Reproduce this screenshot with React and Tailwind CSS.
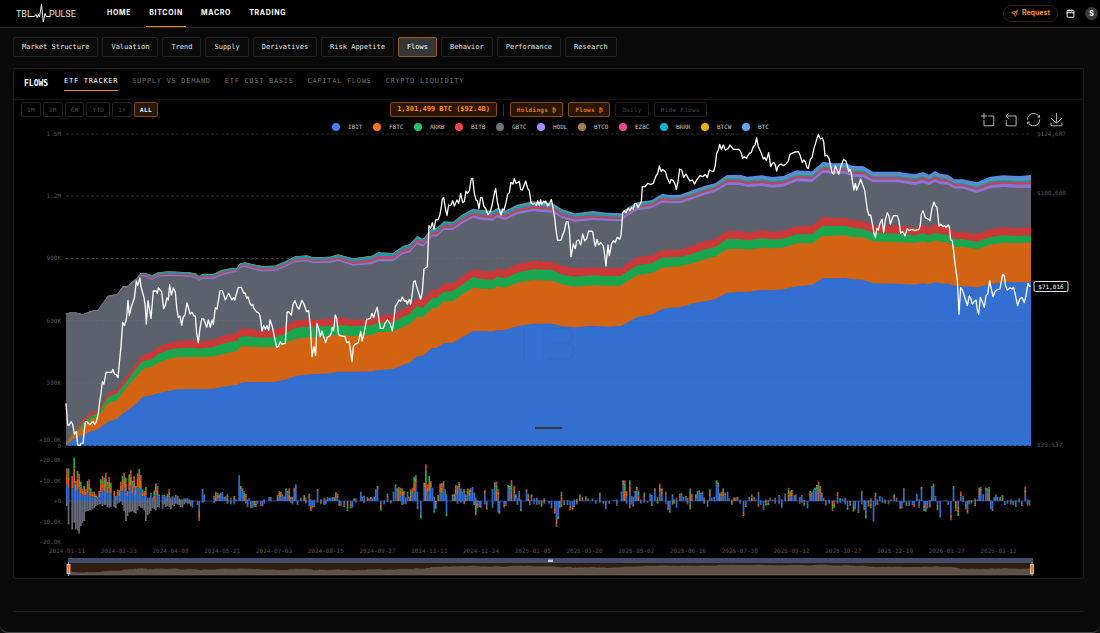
import { useState } from "react";
import { Calendar, Send } from "lucide-react";

const mainNav = ["HOME", "BITCOIN", "MACRO", "TRADING"];
const sections = [
  "Market Structure",
  "Valuation",
  "Trend",
  "Supply",
  "Derivatives",
  "Risk Appetite",
  "Flows",
  "Behavior",
  "Performance",
  "Research",
];
const tabs = ["ETF TRACKER", "SUPPLY VS DEMAND", "ETF COST BASIS", "CAPITAL FLOWS", "CRYPTO LIQUIDITY"];
const ranges = ["1M", "3M", "6M", "YTD", "1Y", "ALL"];

const legend = [
  { name: "IBIT", dot: "bg-[#3b82f6]" },
  { name: "FBTC", dot: "bg-[#f97316]" },
  { name: "ARKB", dot: "bg-[#22c55e]" },
  { name: "BITB", dot: "bg-[#ef4444]" },
  { name: "GBTC", dot: "bg-[#6b7280]" },
  { name: "HODL", dot: "bg-[#a78bfa]" },
  { name: "BTCO", dot: "bg-[#a87c4f]" },
  { name: "EZBC", dot: "bg-[#ec4899]" },
  { name: "BRRR", dot: "bg-[#06b6d4]" },
  { name: "BTCW", dot: "bg-[#eab308]" },
  { name: "BTC", dot: "bg-[#60a5fa]" },
];

// x, then the upper edge of: whole stack, GBTC, BITB, ARKB, FBTC, IBIT
const stack = [
  [66, 313.5, 313.7, 442, 443, 444, 445],
  [73, 312, 312.6, 431.7, 433, 435, 439.3],
  [78, 313, 313.7, 426, 429, 431, 437],
  [83, 314.3, 315, 420, 423.3, 426.7, 435],
  [90, 311.3, 312, 412.7, 416.7, 420, 431.7],
  [98, 309.7, 310.5, 410, 413.3, 416.7, 429.3],
  [108, 295.7, 297, 393.3, 397.3, 403.3, 421.7],
  [117, 294.3, 295.6, 388.7, 393.3, 400, 418.7],
  [123, 286.3, 287.7, 380.7, 385.7, 391.7, 413.3],
  [127, 286.3, 287.7, 376, 381, 386.7, 410.7],
  [137, 277.7, 279.5, 361.7, 367.3, 376, 403.3],
  [141, 272.7, 275.7, 356.7, 362.3, 370.7, 398.3],
  [145, 273, 276.7, 354, 360.7, 368.3, 396.3],
  [152, 275.3, 279.7, 352, 359.3, 366.7, 395.3],
  [158, 272.3, 276.7, 347, 354, 363, 393.3],
  [168, 271.3, 276, 343.3, 350, 359, 391],
  [178, 271.7, 276.3, 341, 348.3, 357.3, 389.3],
  [190, 272.3, 276.7, 340.3, 347.7, 357, 389],
  [196, 273.5, 278.5, 340.7, 348, 357, 389],
  [199, 276, 280.7, 341.7, 348.7, 357.3, 389],
  [203, 273.7, 278.7, 341, 348, 357, 389],
  [213, 274, 279, 340, 347.3, 356.3, 388.7],
  [222, 270, 275.3, 336, 344, 354.3, 386.7],
  [230, 268.3, 273, 334, 342, 352.3, 385.7],
  [237, 267.7, 272, 333.3, 341, 351, 385],
  [240, 263.3, 268, 329, 336.7, 347, 383],
  [245, 262.3, 267, 328.3, 336, 346, 382],
  [252, 264, 269.3, 329.3, 336.7, 346.7, 382],
  [262, 266, 271.3, 330.7, 337.7, 347, 382],
  [275, 265.7, 271, 330, 337.3, 346.7, 381.7],
  [285, 261.3, 267, 325.7, 333.7, 343.3, 379.7],
  [295, 256.3, 262.3, 320.5, 328, 339, 376],
  [307, 255.3, 261.3, 319, 326.7, 337.3, 374.7],
  [313, 257.3, 263.3, 320, 327, 337.3, 374],
  [330, 256.7, 262.7, 318.7, 326, 336, 373.3],
  [338, 254.3, 261, 316.7, 324.7, 334.7, 371.7],
  [353, 258.3, 265.7, 319.7, 326.3, 336, 371.7],
  [372, 255.7, 264, 318.3, 325.3, 334.7, 371.3],
  [378, 252.3, 261.3, 315.7, 322.7, 332.3, 370],
  [393, 253, 261.3, 314.3, 322.3, 331.7, 369],
  [403, 246, 254.3, 309, 316.7, 326.7, 364.7],
  [410, 244, 252.3, 306, 314, 324, 362.3],
  [417, 236, 244.3, 298, 306, 316.7, 356.3],
  [423, 238.7, 246.7, 298.7, 307.7, 317.3, 355.7],
  [432, 228.3, 236.7, 289.3, 298.3, 308.3, 348],
  [437, 227.7, 236.7, 290, 297.3, 307.7, 347.7],
  [444, 221.3, 230, 283.3, 291.7, 301.3, 343],
  [453, 221.7, 230, 283.3, 291, 301, 342.7],
  [463, 214, 223.3, 275.7, 284, 294, 336.7],
  [473, 208.7, 217.7, 269.3, 277.3, 287.7, 331],
  [482, 210, 220, 270.7, 279, 288.7, 331],
  [493, 210.7, 220.7, 271.7, 280, 289, 331.3],
  [497, 208, 217.3, 268, 276.7, 286.3, 330],
  [505, 210.7, 220, 270, 278.3, 287.7, 330],
  [517, 204.7, 214.3, 264.3, 272.7, 282.7, 326.3],
  [533, 201.3, 211.3, 260.7, 269.3, 280, 323.7],
  [553, 203.3, 212.7, 262, 270, 280.7, 323.7],
  [562, 209.3, 218.3, 266, 274.7, 284.3, 326.3],
  [575, 213.3, 221.7, 268.3, 276.7, 286.7, 327.3],
  [593, 211, 220, 267.3, 275.3, 285.3, 325.7],
  [607, 212.7, 220.7, 268.3, 276, 285.7, 326.7],
  [621, 213.3, 221.3, 268, 276, 285.7, 326],
  [627, 208, 216, 263.3, 271.7, 281.3, 322.7],
  [638, 202, 210, 257, 265, 275, 316.7],
  [652, 200, 208, 255.3, 263.3, 273, 314.7],
  [662, 193.7, 202.7, 250, 257.7, 267.7, 309],
  [670, 195, 203.3, 249.7, 257.3, 267, 307.7],
  [680, 194.7, 203.3, 249.7, 257, 266.3, 307.3],
  [693, 190, 199, 245.3, 253.7, 263.3, 303.3],
  [705, 185.7, 194.7, 241, 249.3, 259, 301],
  [715, 183.3, 192, 239.3, 247.3, 256.7, 299.3],
  [727, 175, 185, 231, 239, 249.3, 292.7],
  [740, 174.7, 185, 231, 239, 248.7, 291.7],
  [747, 176.7, 187, 232.7, 240.3, 249.7, 292],
  [762, 175.3, 186, 230.3, 238.3, 247.7, 289.7],
  [772, 177, 187.7, 231.7, 239.3, 248.3, 290],
  [783, 176, 186.7, 230.7, 238.7, 247.7, 289.3],
  [797, 170.3, 181.3, 226, 234.3, 243.3, 286.3],
  [812, 171.3, 182, 225.7, 234.3, 243.3, 285],
  [823, 161.7, 172.7, 217, 225.7, 235.7, 278],
  [833, 163.3, 174, 218, 226, 235.7, 278.3],
  [845, 163, 173.7, 217.7, 225.7, 235.3, 277.7],
  [853, 166, 177, 220, 228, 237, 279.3],
  [863, 166, 177.3, 221, 229, 237.3, 279.7],
  [873, 171.7, 182.3, 225.3, 232.7, 241.3, 283.3],
  [897, 171.7, 182.3, 225.3, 233.7, 242, 283.7],
  [915, 174.3, 185, 227.3, 235.3, 243, 284.7],
  [923, 172, 182.7, 225, 233.3, 241.3, 283.3],
  [929, 174.7, 185, 227, 235.3, 243, 284.3],
  [935, 171, 181.7, 224, 232.7, 240.3, 282.3],
  [940, 173.7, 184, 226, 234, 241.7, 283.3],
  [948, 174.7, 184.7, 226.7, 234.7, 242.3, 283.7],
  [954, 179.3, 188.3, 231.7, 239, 246.7, 285.7],
  [963, 179.3, 188.7, 232, 239.3, 246.7, 286],
  [977, 182.3, 193, 234, 241.7, 249.3, 287.3],
  [990, 176.7, 188.3, 229.3, 237.3, 244.7, 284.3],
  [1003, 175.3, 187, 227.3, 235.3, 242.7, 281.7],
  [1020, 176, 188, 228, 236, 243, 282.3],
  [1031, 175, 187.7, 227.3, 235.3, 242.3, 281.7],
];

// share of the thin bands on top of GBTC, at the left and right end
const thinBands = [
  { fill: "#9171de", from: 0.24, to: 0.27 },
  { fill: "#8c6239", from: 0.17, to: 0.1 },
  { fill: "#c93a80", from: 0.2, to: 0.13 },
  { fill: "#0aa0b0", from: 0.3, to: 0.12 },
  { fill: "#b08d2a", from: 0.07, to: 0.05 },
  { fill: "#4f8ee0", from: 0.02, to: 0.33 },
];

// BTC price, four traces on a 3x raster with their own origin
const price = [
  {
    x: 30,
    y: 120,
    pts: "108,850 113,915 118,915 123,905 128,912 133,942 139,935 143,975 150,976 153,970 159,970 162,940 166,905 171,905 175,910 180,914 185,907 190,905 194,914 199,905 205,880 209,845 213,820 217,785 222,792 228,757 245,757 248,748 254,763 258,763 264,773 268,730 273,680 278,607 283,617 289,600 294,541 298,587 304,560 313,535 319,483 323,497 330,474 333,500 342,533 346,560 349,612 354,542 358,565 363,595 370,513 379,513 382,520 385,503 395,516 401,566 406,556 411,533 415,540 419,494 424,525 430,504 436,516 441,570 445,592 450,588 455,616 460,590 465,585 471,549 476,565 480,582 486,577 492,588 496,588 500,640 505,668 510,625 515,597 521,597 525,607 530,622 535,600 541,622 546,600 550,613 556,563 561,567 570,512 577,512 586,540 596,520 606,540 611,532 614,540 625,502 634,502 641,520 645,518 650,535 654,530 660,550 664,557 668,553 672,566 679,575 688,580 692,600 696,633 701,617 706,628 711,617 716,632 720,600 727,620 732,645 740,682 745,680 751,665 755,672 766,670 771,577 776,575 784,585 789,553 795,542 801,560 807,567 816,541 822,553 830,575 836,572 841,617 846,710 852,680 857,706 861,610 866,625 871,650 876,633 881,650 887,668 892,652 896,650",
  },
  {
    x: 300,
    y: 160,
    pts: "90,528 95,515 97,502 101,512 106,465 110,475 115,520 119,527 135,530 140,548 147,545 152,575 156,605 160,560 165,553 175,548 182,515 186,543 192,520 200,478 211,475 216,460 221,473 226,455 232,442 237,480 241,505 250,505 255,490 262,480 270,490 277,513 281,485 286,440 290,433 297,420 302,424 307,411 314,424 319,422 322,432 328,418 332,432 337,400 341,365 345,362 350,380 362,418 367,395 372,327 382,320 384,270 387,197 392,205 397,188 402,208 407,180 415,178 420,163 424,140 427,118 431,112 437,150 441,166 446,135 452,137 458,122 463,138 471,120 476,130 482,100 488,128 493,124 498,93 502,100 508,92 514,55 518,55 523,100 528,120 532,122 537,145 542,112 546,112 552,140 557,145 564,165 571,155 577,132 583,100 587,85 592,125 597,147 603,165 608,147 612,150 618,128 623,103 628,98 633,67 639,72 643,56 648,70 658,65 662,88 667,90 677,63 683,85 688,92 693,127 698,133 704,130 709,136 713,122 718,136 722,120 726,133 731,123 734,128 737,123 743,138 749,130 754,118 759,143 765,180 768,210 773,241 783,241 788,225 793,213 799,185 804,185 808,210 813,290 820,252 826,266 830,243 836,240 842,255 848,222 854,243 860,236 866,213 878,214 882,240 886,258 891,238 896,255",
  },
  {
    x: 580,
    y: 120,
    pts: "62,368 66,372 70,378 74,405 78,438 84,375 88,407 95,370 101,362 105,368 112,352 119,358 123,345 126,310 128,278 133,272 138,278 144,265 150,272 155,263 160,268 164,250 169,250 174,263 184,245 187,200 196,200 203,190 212,193 220,190 227,170 233,160 238,138 244,155 248,148 256,155 262,175 269,190 274,178 280,182 285,192 289,208 294,185 299,147 305,150 311,173 318,162 325,175 330,183 337,180 344,192 350,180 360,167 368,170 376,163 382,173 388,150 395,153 401,155 406,135 410,100 415,90 419,73 424,88 430,75 436,90 444,86 450,75 460,88 476,88 482,95 488,115 493,110 499,115 508,100 514,97 520,80 525,75 530,54 535,80 543,97 550,117 554,112 559,122 566,98 572,140 577,130 582,128 586,135 590,153 595,137 603,132 610,137 617,133 624,125 630,103 636,100 644,96 655,95 660,105 667,128 671,120 676,125 681,143 685,145 691,118 696,112 702,85 708,65 715,43 721,57 727,54 731,65 735,108 740,105 747,115 752,138 756,157 761,163 766,138 771,148 776,163 783,138 791,118 797,122 801,133 806,155 810,148 814,160 818,190 822,210 826,190 830,210 836,195 842,177 848,195 854,210 858,240 862,270 867,286 872,285 877,310 882,340 886,352 891,325 895,330",
  },
  {
    x: 800,
    y: 120,
    pts: "240,310 246,298 251,338 256,300 262,278 267,288 271,312 280,287 292,287 297,303 302,340 308,335 315,348 322,325 328,332 337,328 345,332 357,328 361,315 364,283 369,272 376,293 384,297 390,302 396,265 402,246 407,258 411,262 417,318 423,313 429,320 434,317 438,322 445,315 448,322 452,360 457,363 461,395 465,430 472,480 475,540 477,583 482,502 487,510 491,522 502,557 508,527 513,538 517,553 522,545 528,540 532,570 536,583 541,532 546,543 553,562 558,527 563,522 569,482 573,503 579,530 585,515 590,510 600,507 604,485 608,463 613,468 616,495 622,510 630,503 636,507 641,502 647,530 653,557 659,537 666,532 673,548 678,527 684,490 688,498 692,500",
  },
];

// daily flows on the same raster: x, inflow height, outflow height
const flows = [
  {
    x: 30,
    pts: "108,98,15 113,98,70 124,75,85 130,130,65 135,60,85 140,90,88 145,82,98 150,58,75 155,38,65 160,45,60 165,35,32 170,60,30 175,65,27 180,38,28 185,28,25 190,28,20 195,20,15 200,12,12 205,30,10 210,65,10 215,75,15 220,70,12 225,85,12 230,58,18 235,73,20 240,55,18 250,30,18 255,15,22 260,35,8 265,32,5 270,58,0 275,75,12 280,85,30 285,70,60 290,30,45 295,80,35 300,92,32 305,60,30 310,75,35 315,45,38 320,83,28 325,96,15 330,78,20 335,35,22 340,30,28 345,42,60 350,10,42 355,10,38 360,25,30 365,10,22 370,32,25 375,53,28 380,45,18 385,20,20 395,18,25 400,18,10 405,14,18 410,22,15 415,35,18 420,10,25 425,14,12 430,10,15 435,18,8 440,15,10 445,8,12 450,5,18 455,5,20 460,8,10 465,8,5 470,8,8 475,5,8 480,2,15 485,2,20 500,0,12 505,0,60 515,36,5 520,20,3 550,15,5 555,28,0 560,24,0 565,20,0 570,25,0 575,27,0 580,12,0 585,14,0 590,22,8 600,10,10 610,15,10 615,5,0 625,77,0 630,45,0 635,38,0 640,30,0 645,22,8 650,5,18 655,8,0 660,0,22 665,0,20 670,0,17 675,0,18 680,0,8 690,0,15 695,0,16 700,5,8 715,12,0 720,12,0 740,18,0 745,30,0 750,28,0 755,20,0 760,14,0 765,38,0 770,30,0 775,38,0 780,12,5 785,12,10 790,40,0 795,50,0 800,2,12 810,10,0 820,18,0 825,10,8 835,22,15 840,5,30 845,2,22 850,4,18 860,36,5 870,5,8 880,10,12 885,5,10 890,12,0 895,10,0 900,10,0 905,12,0 910,12,0 915,27,0 920,22,0 925,3,15 930,0,14 940,0,18 950,0,30 960,0,22 965,0,20 970,8,0 975,8,5 990,28,0 995,12,0 1000,16,5 1010,12,0 1015,8,0 1020,12,0 1025,10,0 1030,12,0 1035,35,0 1040,45,0",
  },
  {
    x: 380,
    pts: "0,0,28 10,2,10 20,22,4 30,2,8 38,28,0 44,50,0 49,38,0 54,42,0 59,40,0 64,38,12 69,30,10 75,10,10 80,28,0 85,12,0 90,35,0 95,40,0 100,73,0 105,77,0 110,28,25 120,0,52 130,55,0 135,110,0 140,50,0 145,75,0 150,60,0 155,40,0 160,12,35 165,0,25 172,18,0 178,52,0 183,54,0 188,60,0 193,35,0 197,20,46 215,20,0 220,22,0 225,48,0 230,45,8 235,57,0 240,38,5 245,28,0 250,35,10 255,20,0 260,38,0 265,35,0 270,38,0 275,42,0 280,25,12 285,10,42 290,2,22 295,0,18 300,0,20 312,33,10 318,0,26 335,35,20 342,56,0 347,58,0 352,35,35 356,0,38 370,0,20 375,0,15 382,48,0 387,45,0 392,63,0 400,45,0 405,20,0 410,8,12 415,30,0 420,5,30 437,35,0 442,22,0 447,3,12 452,20,0 460,8,10 468,10,12 475,2,10 482,2,18 490,8,8 505,0,8 512,0,22 522,0,38 527,0,78 532,0,55 537,0,22 542,28,18 550,2,12 560,3,12 568,0,28 575,0,28 580,5,18 588,6,10 597,20,0 605,12,0 615,14,0 622,8,0 635,8,0 645,2,8 657,25,5 668,0,8 675,0,25 685,0,8 700,3,0 708,5,15 722,28,0 727,62,0 732,62,0 737,30,8 747,62,22 752,15,10 757,12,18 763,30,0 768,42,0 773,32,0 780,5,8 790,25,5 800,0,5 808,22,0 813,18,15 822,38,0 830,12,8 837,52,0 843,38,0 855,28,10 862,0,28 867,0,35 875,20,12 880,5,8 887,10,20 897,22,0 902,25,0 908,12,0 915,15,0 920,10,10 928,38,25 933,22,0 945,20,0 950,30,0 955,32,0 960,25,0 965,28,0 970,10,8 980,2,18 987,35,0 993,10,0 1000,12,0 1007,62,0 1012,55,0 1017,25,0 1022,28,0 1027,38,0 1033,25,0 1040,28,0 1045,8,0",
  },
  {
    x: 730,
    pts: "3,5,12 10,12,0 15,10,0 20,12,0 28,4,8 38,0,45 45,2,18 55,12,0 63,20,0 70,12,0 75,5,0 83,28,18 90,2,12 98,0,28 105,5,15 112,2,12 118,10,0 125,5,0 133,10,8 145,18,8 153,5,20 163,22,0 173,40,0 178,30,0 183,33,0 190,18,0 195,20,0 207,12,8 213,18,5 220,3,14 230,0,22 238,30,0 243,28,0 248,35,0 253,40,0 258,48,0 263,58,0 268,45,0 273,25,0 278,10,0 285,3,14 295,4,8 305,0,30 310,3,20 320,27,8 328,8,5 335,8,0 343,10,10 350,0,26 358,0,15 368,0,32 373,0,25 383,0,35 393,32,10 400,3,28 405,0,52 413,2,18 420,8,22 428,0,62 434,25,14 440,5,12 447,15,0 455,10,5 463,5,8 473,2,10 480,4,0 490,20,0 497,10,3 508,0,25 513,0,22 519,38,5 527,0,15 535,0,15 545,0,12 550,0,18 558,22,0 565,5,20 572,42,0 580,0,30 585,0,32 590,0,22 597,3,20 603,45,0 608,52,0 614,15,0 620,0,28 628,0,50 645,2,0 652,0,12 660,0,58 668,45,0 675,0,30 682,0,45 690,28,0 697,15,3 705,0,25 710,0,38 715,2,10 722,3,8 733,8,15 740,5,0 745,40,0 750,42,0 757,20,0 765,40,0 770,38,0 775,42,0 780,2,25 785,0,30 790,12,0 795,20,0 800,12,0 808,12,0 815,18,0 822,0,12 830,2,8 840,5,10 847,0,12 855,2,18 865,8,5 873,0,15 883,43,0 890,5,14 896,3,14",
  },
];

const leftAxis = [
  [134, "1.5M"],
  [196, "1.2M"],
  [258, "900K"],
  [321, "600K"],
  [383, "300K"],
  [440, "+30.0K"],
  [446, "0"],
  [460, "+20.0K"],
  [481, "+10.0K"],
  [501, "+0"],
  [522, "-10.0K"],
  [542, "-20.0K"],
];
const rightAxis = [
  [134, "$124,687"],
  [193, "$100,000"],
  [445, "$39,537"],
];
const dates = [
  "2024-01-11",
  "2024-02-23",
  "2024-04-08",
  "2024-05-21",
  "2024-07-03",
  "2024-08-15",
  "2024-09-27",
  "2024-11-11",
  "2024-12-24",
  "2025-02-05",
  "2025-03-20",
  "2025-05-02",
  "2025-06-16",
  "2025-07-30",
  "2025-09-12",
  "2025-10-27",
  "2025-12-10",
  "2026-01-27",
  "2026-03-12",
];

const band = (top, bottom) =>
  "M" + top.map((p) => p.join(",")).join("L") + "L" + [...bottom].reverse().map((p) => p.join(",")).join("L") + "Z";

const edge = (i) => stack.map((row) => [row[0], row[i]]);
const base = stack.map((row) => [row[0], 446]);

// every band runs down to the zero line and the next one is painted over it
const bigBands = [
  { fill: "#5c626d", d: band(edge(2), base) },
  { fill: "#cb3838", d: band(edge(3), base) },
  { fill: "#1aa64f", d: band(edge(4), base) },
  { fill: "#d26313", d: band(edge(5), base) },
  { fill: "#326fd1", d: band(edge(6), base) },
];

const shareUpTo = (n, t) =>
  thinBands.slice(0, n).reduce((sum, b) => sum + b.from + (b.to - b.from) * t, 0);

const thinEdge = (n) =>
  stack.map(([x, top, grey]) => {
    const t = Math.max(0, Math.min(1, (x - 400) / 400));
    return [x, grey - (grey - top) * shareUpTo(n, t)];
  });

const smallBands = thinBands
  .map((b, i) => ({ fill: b.fill, d: band(thinEdge(i + 1), base) }))
  .reverse();

const pricePoints = price.flatMap(({ x, y, pts }) =>
  pts.split(" ").map((p) => {
    const [px, py] = p.split(",").map(Number);
    return [x + px / 3, y + py / 3];
  })
);

const dayFlows = flows.flatMap(({ x, pts }) =>
  pts.split(" ").map((p) => {
    const [px, up, down] = p.split(",").map(Number);
    return { x: x + px / 3, up: up / 3, down: down / 3 };
  })
);

const BLUE = "#326cd0";
const ORANGE = "#d9640f";
const GREEN = "#1fae52";
const RED = "#c94040";
const GREY = "#646a76";
const SKY = "#5b95e8";

const mixes = [
  [[BLUE, 0.75], [ORANGE, 0.17], [SKY, 0.08]],
  [[BLUE, 0.4], [ORANGE, 0.35], [GREEN, 0.25]],
  [[BLUE, 0.8], [GREEN, 0.2]],
  [[BLUE, 0.5], [ORANGE, 0.3], [RED, 0.2]],
  [[BLUE, 1]],
  [[ORANGE, 0.5], [GREEN, 0.35], [RED, 0.15]],
  [[BLUE, 0.7], [ORANGE, 0.2], [GREY, 0.1]],
];

function FlowBar({ day, index }) {
  const upMix = day.x < 145 ? mixes[index % 2 ? 1 : 3] : mixes[(index * 5) % 7];
  const downMix = day.x < 190 ? [[GREY, 1]] : mixes[(index * 3 + 5) % 7];
  const parts = [];
  let y = 501;
  upMix.forEach(([fill, share], i) => {
    y -= day.up * share;
    parts.push(<rect key={"u" + i} x={day.x} y={y} width="1.7" height={day.up * share} fill={fill} />);
  });
  y = 501;
  downMix.forEach(([fill, share], i) => {
    parts.push(<rect key={"d" + i} x={day.x} y={y} width="1.7" height={day.down * share} fill={fill} />);
    y += day.down * share;
  });
  return <g>{parts}</g>;
}

function Logo() {
  return (
    <svg viewBox="0 0 62 22" className="h-[22px] w-[62px]" role="img" aria-label="TBL Pulse">
      <text x="0" y="15" fill="#e5e5e5" className="font-['Roboto'] text-[9px]">TBL</text>
      <text x="33" y="15" fill="#e5e5e5" className="font-['Roboto'] text-[9px]">PULSE</text>
      <path
        d="M14 14.5H18.500l1.500-2 1.200 3 1.300-3 1 2.500L25.500 2.500l1.800 17.500L29 11.500l1.200 3H34"
        fill="none"
        stroke="#f5f5f5"
        strokeWidth="1"
        strokeLinejoin="round"
      />
    </svg>
  );
}

const tools = [
  { name: "Zoom", d: "M0,13.5h26.9 M13.5,26.9V0 M32.1,13.5H58V58H13.5 V32.1" },
  { name: "Zoom reset", d: "M22,1.4L9.9,13.5l12.3,12.3 M10.3,13.5H54.9v44.6 H10.3v-26" },
  {
    name: "Restore",
    d: "M3.8,33.4 M47,18.9h9.8V8.7 M56.3,20.1 C52.1,9,40.5,0.6,26.8,2.1C12.6,3.7,1.6,16.2,2.1,30.6 M13,41.1H3.1v10.2 M3.7,39.9c4.2,11.1,15.8,19.5,29.5,18 c14.2-1.6,25.2-14.1,24.7-28.5",
  },
  { name: "Save", d: "M4.7,22.9L29.3,45.5L54.7,23.4M4.6,43.6L4.6,58L53.8,58L53.8,43.6M29.2,45.1L29.2,0" },
];

function Toolbox() {
  return (
    <div className="absolute top-11 right-5 flex gap-2.5">
      {tools.map((tool) => (
        <button key={tool.name} aria-label={tool.name} className="size-[13px]">
          <svg viewBox="0 0 59 59" className="size-[13px] overflow-visible">
            <path d={tool.d} fill="none" stroke="#b4b4b4" strokeWidth="4.5" />
          </svg>
        </button>
      ))}
    </div>
  );
}

function Chart() {
  return (
    <svg viewBox="14 132 1069 446" className="block w-full overflow-visible text-[6px]">
      <g stroke="#2b2b2b" strokeDasharray="3 2">
        {[134, 196, 258.5].map((y) => (
          <line key={y} x1="66" x2="1031" y1={y} y2={y} />
        ))}
      </g>

      {smallBands.map((b) => (
        <path key={b.fill} d={b.d} fill={b.fill} />
      ))}
      {bigBands.map((b) => (
        <path key={b.fill} d={b.d} fill={b.fill} />
      ))}
      <g stroke="#8a8a8a" strokeOpacity="0.13" strokeDasharray="3 2">
        {[258.5, 320.5, 383].map((y) => (
          <line key={y} x1="66" x2="1031" y1={y} y2={y} />
        ))}
      </g>
      <line x1="66" x2="1031" y1="445.5" y2="445.5" stroke="#1f4583" strokeDasharray="3 2" />

      <g fill="none" stroke="#2f69c8" strokeOpacity="0.5">
        <path d="M524 328v32" strokeWidth="2" />
        <rect x="528" y="327" width="14" height="33" fill="#3571d5" stroke="none" />
        <path d="M547 328h18q8 1 8 8t-8 7h-13M565 343q9 1 9 8t-9 8h-18" strokeWidth="2" />
      </g>
      <rect x="535" y="427" width="27" height="2" fill="#333333" />

      <polyline
        points={pricePoints.map((p) => p.join(",")).join(" ")}
        fill="none"
        stroke="#ffffff"
        strokeWidth="1.3"
        strokeLinejoin="round"
      />

      <line x1="66" x2="1029" y1="501" y2="501" stroke="#3b5a8f" strokeWidth="0.7" />
      {dayFlows.map((day, i) => (
        <FlowBar key={i} day={day} index={i} />
      ))}

      <g fill="#555555">
        {leftAxis.map(([y, label]) => (
          <text key={label} x="61" y={y + 2} textAnchor="end">{label}</text>
        ))}
        {rightAxis.map(([y, label]) => (
          <text key={label} x="1037" y={y + 2}>{label}</text>
        ))}
        {dates.map((date, i) => (
          <text key={date} x={67 + i * 51.75} y="553" textAnchor="middle">{date}</text>
        ))}
      </g>

      <rect x="1034" y="281.500" width="34" height="10" rx="1.500" fill="#000000" stroke="#e5e5e5" />
      <text x="1051" y="288.500" textAnchor="middle" fill="#ffffff">$71,016</text>

      {/* range slider with the price in miniature */}
      <rect x="68" y="558" width="965" height="5" fill="#434c6b" />
      <rect x="68" y="563" width="965" height="12" fill="#2e1e10" />
      <path
        d={
          "M68,575L" +
          pricePoints.map(([x, y]) => `${x + 2},${565 + (y - 134) * 0.026}`).join("L") +
          "L1033,575Z"
        }
        fill="#5e5047"
        stroke="#7a6f73"
        strokeWidth="0.5"
      />
      <rect x="548" y="559.500" width="5" height="2.500" fill="#c3c8d6" />
      {[68.5, 1032].map((x) => (
        <g key={x}>
          <line x1={x} x2={x} y1="562" y2="576" stroke="#9aa3bd" />
          <rect x={x - 1.5} y="564.500" width="3" height="9" fill="#f97316" stroke="#e8e8ee" strokeWidth="0.7" />
        </g>
      ))}
    </svg>
  );
}

export default function App() {
  const [section, setSection] = useState("Flows");
  const [tab, setTab] = useState("ETF TRACKER");
  const [range, setRange] = useState("ALL");

  return (
    <div className="min-h-screen bg-[#111111] font-['DejaVu_Sans_Mono',monospace]">
      <div className="flex min-h-screen flex-col overflow-hidden rounded-b-lg border-b border-[#4a4a4a] bg-[#0a0a0a] text-white">
        <header className="flex h-7 items-stretch justify-between border-b border-[#262626] bg-black pr-0.5 pl-4">
          <div className="flex">
            <a href="#home" className="mt-0.5 mr-[26px]">
              <Logo />
            </a>
            <nav className="flex gap-3 font-['Inter',sans-serif] text-[7px] font-bold tracking-widest">
              {mainNav.map((item) => (
                <a
                  key={item}
                  href={"#" + item.toLowerCase()}
                  className={`flex items-center border-b px-[3px] ${
                    item === "BITCOIN" ? "border-[#ff8c00]" : "border-transparent"
                  }`}
                >
                  {item}
                </a>
              ))}
            </nav>
          </div>
          <div className="flex items-center font-['Inter',sans-serif]">
            <button className="mr-2 flex h-[17px] items-center gap-1 rounded-full border border-[#3a220a] px-[7px] text-[7px] font-bold text-[#ff8c1a]">
              <Send className="size-[7px]" strokeWidth={2.5} />
              Request
            </button>
            <button aria-label="Calendar" className="mr-2.5">
              <Calendar className="size-[9px]" strokeWidth={2.5} />
            </button>
            <button className="size-[13px] rounded-full bg-[#3a3a3a] text-[7px] leading-[13px] font-bold">S</button>
          </div>
        </header>

        <main className="pr-4 pl-[13px]">
          <nav className="flex flex-wrap gap-1 pt-[9px] text-[7px]">
            {sections.map((item) => (
              <button
                key={item}
                onClick={() => setSection(item)}
                className={`h-5 rounded-xs border px-2 ${
                  item === section ? "border-[#9a5a20] bg-[#363636]" : "border-[#222222] bg-[#0a0a0a] text-[#e5e5e5]"
                }`}
              >
                {item}
              </button>
            ))}
          </nav>

          <section className="relative mt-[11px] rounded-xs border border-[#1c1c1c] bg-black">
            <div className="flex h-[31px] items-center gap-4 border-b border-[#111111] pl-2.5">
              <h1 className="text-[8px] font-bold">FLOWS</h1>
              <div className="flex gap-3.5 text-[7px] leading-2 tracking-widest">
                {tabs.map((item) => (
                  <button
                    key={item}
                    onClick={() => setTab(item)}
                    className={`border-b pb-[5px] ${
                      item === tab ? "border-[#ff8c00] text-white" : "border-transparent text-[#6b6b6b]"
                    }`}
                  >
                    {item}
                  </button>
                ))}
              </div>
            </div>

            <div className="grid grid-cols-[1fr_auto_1fr] px-[7px] pt-0.5 text-[6px] leading-[13px]">
              <div className="flex gap-0.5 tracking-wider">
                {ranges.map((item) => (
                  <button
                    key={item}
                    onClick={() => setRange(item)}
                    className={`rounded-xs border px-[5px] ${
                      item === range
                        ? "border-[#8a4a10] bg-[#2a1605] font-bold text-white"
                        : "border-[#222222] text-[#4f4f4f]"
                    }`}
                  >
                    {item}
                  </button>
                ))}
              </div>
              <div className="flex items-center gap-[5px] tracking-wider">
                <span className="rounded-xs border border-[#8a4a10] bg-[#2a1605] px-1.5 text-[7px] font-bold tracking-normal text-[#ff8c1a]">
                  1,301,499 BTC ($92.4B)
                </span>
                <span className="mx-px h-3 w-px bg-[#333333]" />
                <button className="rounded-xs border border-[#8a4a10] bg-[#2a1605] px-1.5 font-bold text-[#e07a1a]">
                  Holdings ₿
                </button>
                <button className="rounded-xs border border-[#8a4a10] bg-[#2a1605] px-1.5 font-bold text-[#e07a1a]">
                  Flows ₿
                </button>
                <button className="rounded-xs border border-[#1f1f1f] px-1.5 text-[#4a4a4a]">Daily</button>
                <button className="rounded-xs border border-[#1f1f1f] px-1.5 text-[#4a4a4a]">Hide Flows</button>
              </div>
            </div>

            <ul className="mt-1 flex h-[11px] items-center justify-center gap-2.5 pl-2 text-[6px] text-[#c4c4c4]">
              {legend.map((item) => (
                <li key={item.name} className="flex w-[31px] items-center gap-2">
                  <span className={`size-2 shrink-0 rounded-full ${item.dot}`} />
                  {item.name}
                </li>
              ))}
            </ul>

            <Chart />
            <Toolbox />
          </section>

          <footer className="mt-8 border-t border-[#1f1f1f]" />
        </main>
      </div>
    </div>
  );
}
